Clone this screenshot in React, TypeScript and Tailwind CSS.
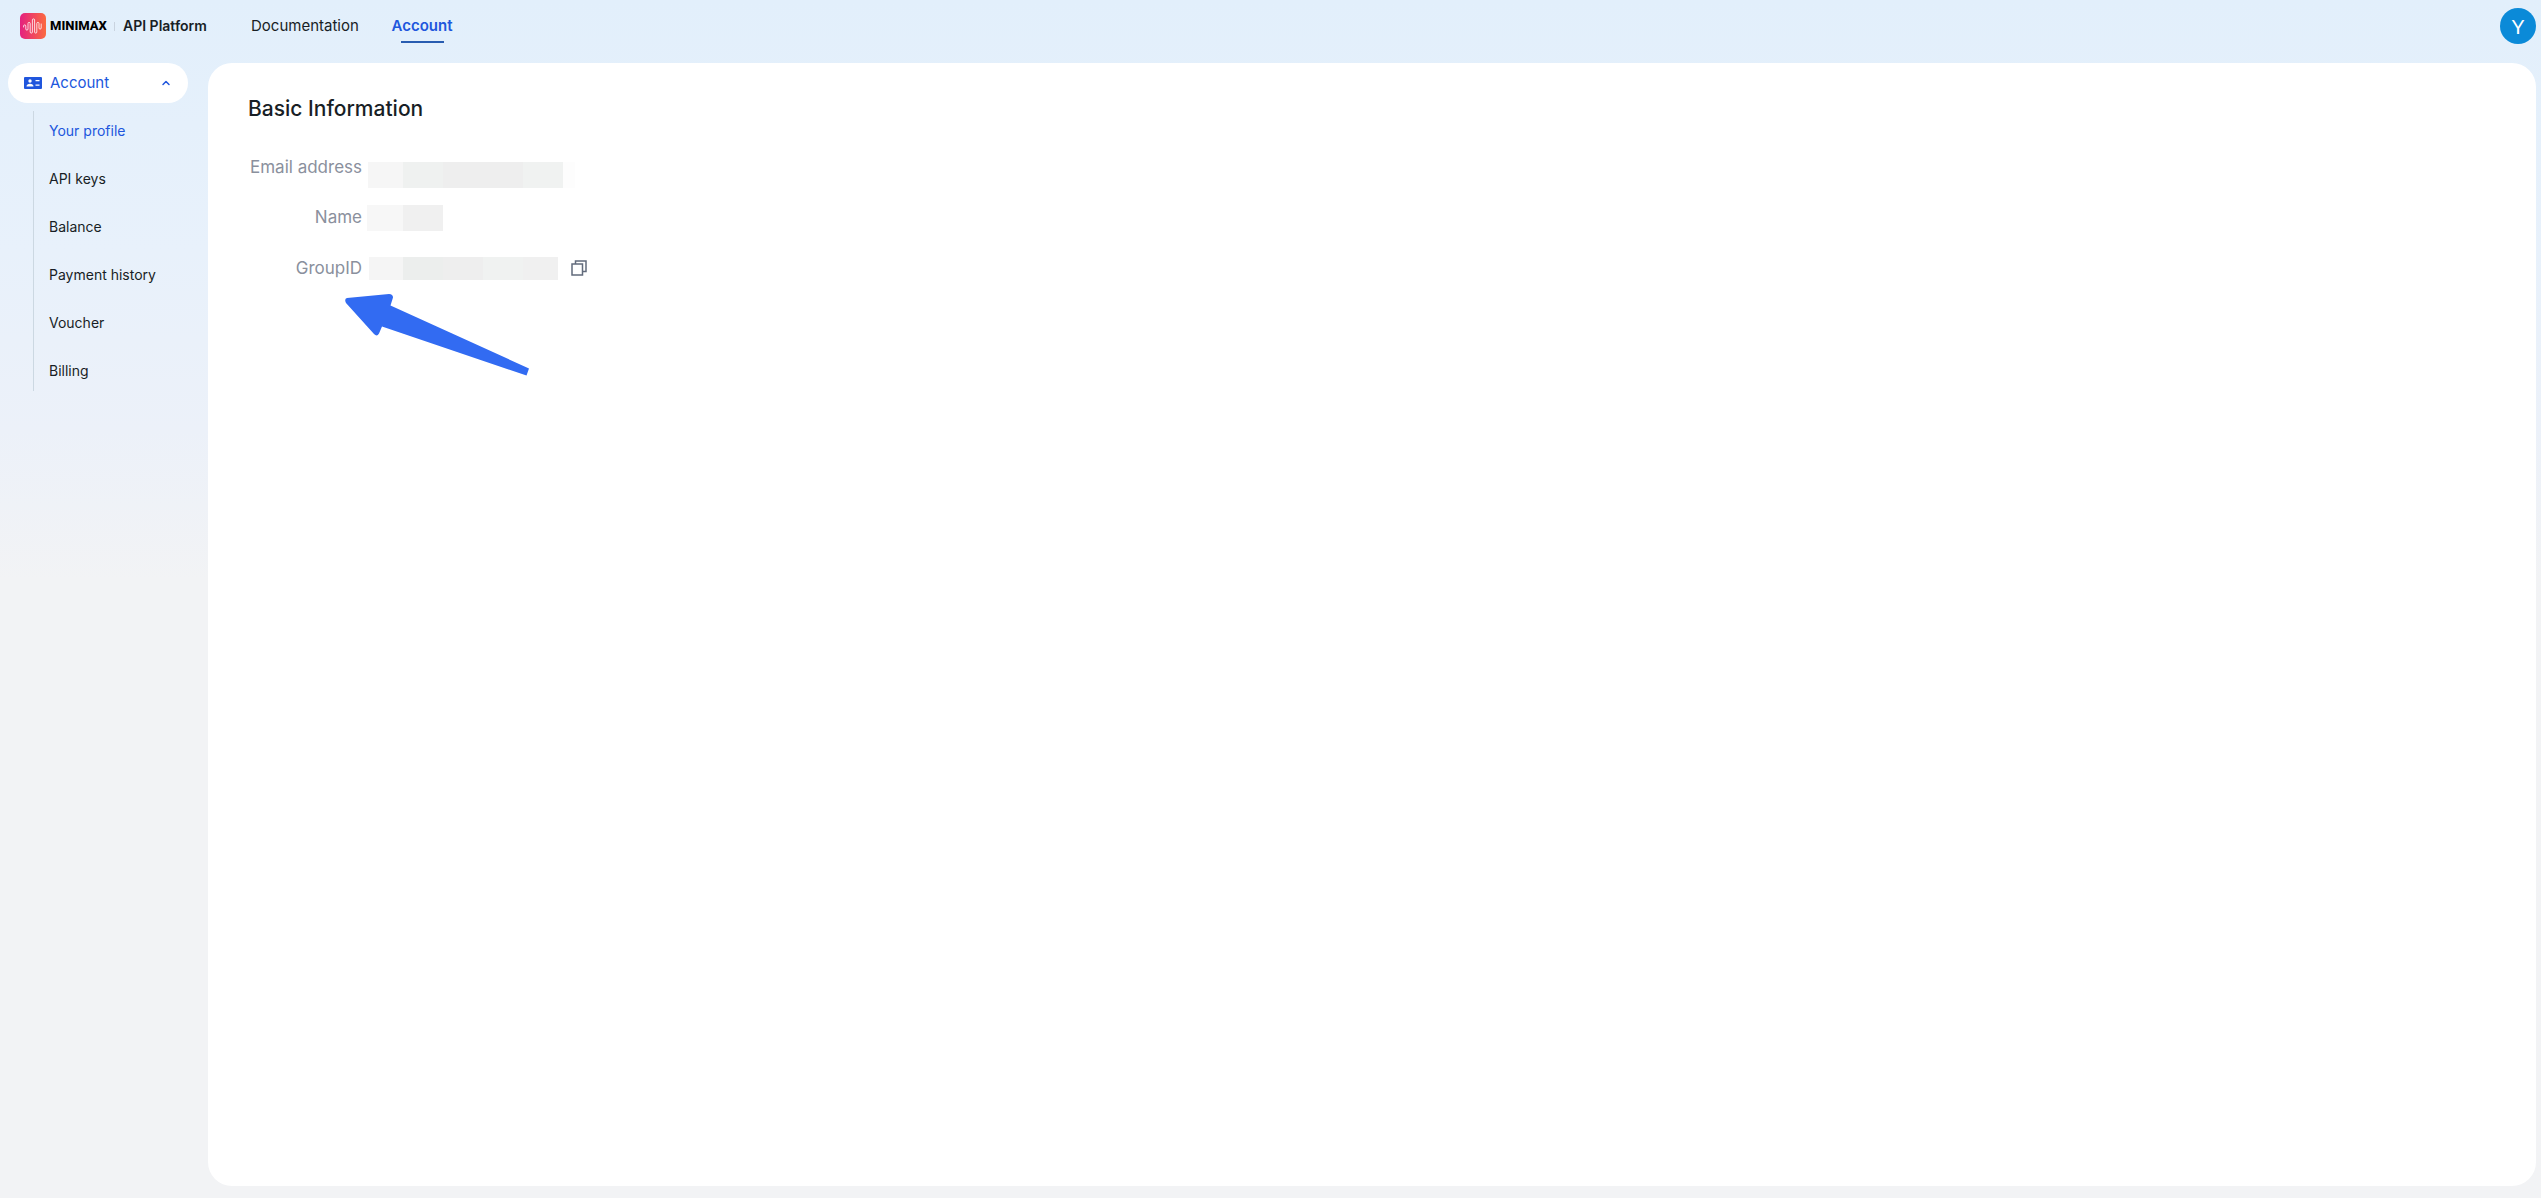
import { ChevronUp } from "lucide-react";

const menu = ["Your profile", "API keys", "Balance", "Payment history", "Voucher", "Billing"];

function Logo() {
  return (
    <svg className="size-[26px]" viewBox="0 0 26 26" fill="none" aria-hidden="true">
      <defs>
        <linearGradient id="logo" x1="0" y1="13" x2="26" y2="13" gradientUnits="userSpaceOnUse">
          <stop stopColor="#e42180" />
          <stop offset="1" stopColor="#fb6a40" />
        </linearGradient>
      </defs>
      <rect width="26" height="26" rx="5" fill="url(#logo)" />
      <path
        d="M3.600 14v-1a1.100 1.100 0 0 1 2.200 0v3a1.100 1.100 0 0 0 2.200 0v-5.500a1.100 1.100 0 0 1 2.200 0V19a1.100 1.100 0 0 0 2.200 0V7a1.100 1.100 0 0 1 2.200 0v12a1.100 1.100 0 0 0 2.200 0v-8.500a1.100 1.100 0 0 1 2.200 0V15a1.100 1.100 0 0 0 2.200 0v-4"
        stroke="#fff"
        strokeWidth=".8"
        strokeLinecap="round"
      />
    </svg>
  );
}

function IdCardIcon() {
  return (
    <svg className="h-3 w-[18px]" viewBox="0 0 18 12" aria-hidden="true">
      <rect width="18" height="12" rx="1" fill="#2056dd" />
      <g fill="#fff">
        <circle cx="6" cy="4" r="1.700" />
        <path d="M2.500 9.500C2.500 7.500 4 6.700 6 6.700s3.500.8 3.500 2.800zM11.500 3h4v1.300h-4zM11.500 7.500h4v1.300h-4z" />
      </g>
    </svg>
  );
}

function CopyIcon() {
  return (
    <svg className="size-4" viewBox="0 0 16 16" fill="none" stroke="#626b7c" strokeWidth="1.500" aria-hidden="true">
      <path d="M1 4h10.500v11H1zM4.500 4V1H15v10.500h-3.500" />
    </svg>
  );
}

function Arrow() {
  return (
    <svg className="absolute top-[228px] left-[136px] h-[86px] w-[188px]" viewBox="0 0 188 86" fill="#326bf2" aria-hidden="true">
      <path d="M3 7 45 3Q49 3 49 6.500L46.500 14.500 185 77.500 182.500 84.500 38 35.500 35 42.500Q33 46 30 43L2 12Q0 8 3 7Z" />
    </svg>
  );
}

export default function App() {
  return (
    <div className="flex min-h-screen flex-col bg-[#f2f3f5] bg-[linear-gradient(180deg,#e2effb_0px,#e8f1fb_250px,#ecf1f9_430px,#f2f3f5_580px)] pr-[5px] pb-3 font-['Inter',sans-serif] text-[#181e25]">
      <header className="flex h-[63px] items-start pt-[13px] pl-5">
        <a href="#home" className="flex h-[26px] items-center">
          <Logo />
          <span className="ml-1 w-[58px] font-['Roboto',sans-serif] text-[13px] leading-5 font-extrabold text-black">MINIMAX</span>
          <span className="ml-[6px] h-[9px] w-px bg-[#c9d3df]" />
          <span className="ml-2 w-[86px] text-sm font-semibold whitespace-nowrap">API Platform</span>
        </a>
        <nav className="ml-[42px] flex gap-8 text-[15px] leading-[26px]">
          <a href="#documentation" className="w-[109px]">Documentation</a>
          <a href="#account" className="flex w-[60px] flex-col items-center font-semibold text-[#2056dd]">
            Account
            <span className="mt-0.5 h-0.5 w-[43px] bg-[#285cb0]" />
          </a>
        </nav>
        <button className="-mt-[5px] ml-auto size-9 rounded-full bg-[#0b8ad8] font-['Lato',sans-serif] text-xl text-white" aria-label="Profile">
          Y
        </button>
      </header>

      <div className="flex flex-1">
        <aside className="w-[208px] shrink-0 px-2">
          <button className="flex h-10 w-[180px] items-center rounded-[20px] bg-white pr-4 pl-4 text-[15px] text-[#2056dd]">
            <IdCardIcon />
            <span className="ml-2">Account</span>
            <ChevronUp className="ml-auto size-3" strokeWidth={3} />
          </button>
          <nav className="mt-2 ml-[25px] flex flex-col gap-2 border-l border-[#ccd8e2] pl-[15px] text-[14px] leading-10">
            {menu.map((item, i) => (
              <a key={item} href="#menu" className={i === 0 ? "text-[#2056dd]" : ""}>
                {item}
              </a>
            ))}
          </nav>
        </aside>

        <main className="relative flex-1 rounded-3xl bg-white px-10 pt-8">
          <h1 className="text-[21px] leading-7 font-medium">Basic Information</h1>
          <dl className="mt-8 text-[17px] leading-6 text-[#8a909d]">
            <div className="flex h-[50px] items-start">
              <dt className="w-[114px] text-right whitespace-nowrap">Email address</dt>
              <dd className="mt-[7px] ml-[6px] flex h-[26px]">
                <span className="w-[35px] bg-[#f6f6f6]" />
                <span className="w-10 bg-[#eff1f0]" />
                <span className="w-20 bg-[#eeeeee]" />
                <span className="w-10 bg-[#f0f2f1]" />
                <span className="w-3 bg-[#fdfdfd]" />
              </dd>
            </div>
            <div className="flex h-[51px] items-start">
              <dt className="w-[114px] text-right">Name</dt>
              <dd className="ml-[5px] flex h-[26px]">
                <span className="w-9 bg-[#f7f7f7]" />
                <span className="w-10 bg-[#f0f0f0]" />
              </dd>
            </div>
            <div className="flex items-center">
              <dt className="w-[114px] text-right">GroupID</dt>
              <dd className="ml-[7px] flex h-[23px] items-center">
                <span className="h-full w-[34px] bg-[#f5f5f5]" />
                <span className="h-full w-10 bg-[#eceeed]" />
                <span className="h-full w-10 bg-[#eeeeee]" />
                <span className="h-full w-10 bg-[#f0f2f1]" />
                <span className="h-full w-[35px] bg-[#f0f0f0]" />
                <button className="ml-[13px]" aria-label="Copy GroupID">
                  <CopyIcon />
                </button>
              </dd>
            </div>
          </dl>
          <Arrow />
        </main>
      </div>
    </div>
  );
}
